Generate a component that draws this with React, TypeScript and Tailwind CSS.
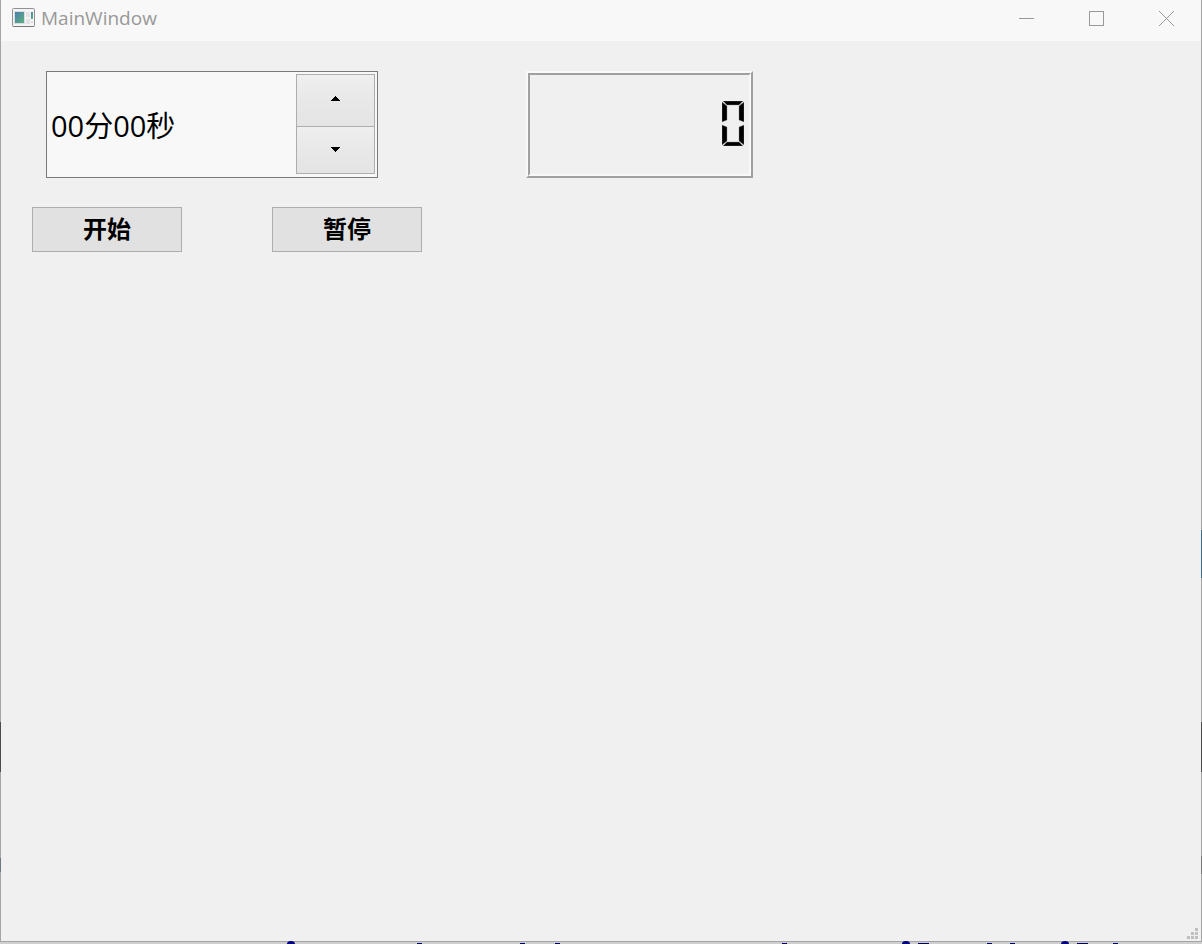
import { useEffect, useState } from "react";

const pad = (n: number) => String(n).padStart(2, "0");
const format = (s: number) => `${pad(Math.floor(s / 60))}分${pad(s % 60)}秒`;

const SEGMENTS = [
  "M1 0H21L17 4H5Z",
  "M22 1V21L17 19V5Z",
  "M22 44V24L17 26V40Z",
  "M1 45H21L17 41H5Z",
  "M0 44V24L5 26V40Z",
  "M0 1V21L5 19V5Z",
  "M3 22.500L6 20H16L19 22.500L16 25H6Z",
];

const LIT = [
  [0, 1, 2, 3, 4, 5],
  [1, 2],
  [0, 1, 6, 4, 3],
  [0, 1, 6, 2, 3],
  [5, 6, 1, 2],
  [0, 5, 6, 2, 3],
  [0, 5, 6, 4, 3, 2],
  [0, 1, 2],
  [0, 1, 2, 3, 4, 5, 6],
  [0, 1, 2, 3, 5, 6],
];

function LcdNumber({ value }: { value: number }) {
  return (
    <div className="h-[107px] w-[227px] border-2 border-t-[#f9f9f9] border-r-[#a0a0a0] border-b-[#a0a0a0] border-l-[#f9f9f9]">
      <div
        role="img"
        aria-label={String(value)}
        className="flex h-full items-center justify-end gap-1 border-2 border-t-[#a0a0a0] border-r-[#f9f9f9] border-b-[#f9f9f9] border-l-[#a0a0a0] pr-[5px] pb-0.5"
      >
        {String(value)
          .split("")
          .map((d, i) => (
            <svg
              key={i}
              width="22"
              height="45"
              viewBox="0 0 22 45"
              stroke="#8a8a8a"
              strokeWidth="0.4"
            >
              {LIT[Number(d)].map((s) => (
                <path key={s} d={SEGMENTS[s]} fill="#000" />
              ))}
            </svg>
          ))}
      </div>
    </div>
  );
}

function AppIcon() {
  return (
    <svg width="24" height="20" viewBox="0 0 24 20" aria-hidden="true">
      <defs>
        <linearGradient id="pane" x1="0" y1="0" x2="1" y2="1">
          <stop offset="0" stopColor="#4a7fae" />
          <stop offset="1" stopColor="#5db07c" />
        </linearGradient>
      </defs>
      <rect x="0.5" y="0.5" width="22" height="18" rx="1" fill="#f4f4f4" stroke="#8f9194" />
      <path d="M1 18.5H22" stroke="#77797c" />
      <rect x="2.500" y="3.500" width="10" height="12" fill="#fff" stroke="#d8dde0" />
      <rect x="3" y="4" width="9" height="11" fill="url(#pane)" />
      <rect x="14" y="4" width="4" height="5" fill="#e2e2e2" />
      <rect x="14" y="11" width="4" height="5" fill="#e2e2e2" />
      <rect x="19" y="4" width="2" height="7" fill="url(#pane)" />
      <rect x="19" y="13" width="2" height="2" fill="#dedede" />
    </svg>
  );
}

function TitleBar() {
  const control = "flex w-[70px] items-center justify-center text-[#999999]";
  return (
    <header className="flex h-[41px] items-stretch bg-[#f8f8f8] pb-1">
      <div className="flex grow items-center gap-[5px] pb-0.5 pl-[11px]">
        <AppIcon />
        <h1 className="text-[19px] leading-6 text-[#999999]">MainWindow</h1>
      </div>
      <button aria-label="Minimize" className={control}>
        <svg width="15" height="15" viewBox="0 0 15 15" stroke="currentColor">
          <path d="M0 7.500H15" />
        </svg>
      </button>
      <button aria-label="Maximize" className={control}>
        <svg width="15" height="15" viewBox="0 0 15 15" fill="none" stroke="currentColor">
          <rect x="0.5" y="0.5" width="14" height="14" />
        </svg>
      </button>
      <button aria-label="Close" className={control}>
        <svg width="15" height="15" viewBox="0 0 15 15" stroke="currentColor">
          <path d="M0 0L15 15M15 0L0 15" />
        </svg>
      </button>
    </header>
  );
}

const MARKS = [
  { x: 417, w: 5 },
  { x: 520, w: 5 },
  { x: 555, w: 5 },
  { x: 782, w: 5 },
  { x: 918, w: 11 },
  { x: 987, w: 5 },
  { x: 1010, w: 5 },
  { x: 1077, w: 11 },
  { x: 1113, w: 5 },
];

function Backdrop() {
  return (
    <svg height="3" className="block w-full bg-[#cfcfcf]" aria-hidden="true">
      <rect width="100%" height="1" fill="#a5a5a5" />
      {[291, 906, 1065].map((x) => (
        <ellipse key={x} cx={x} cy="3" rx="4" ry="3" fill="#00007f" />
      ))}
      {MARKS.map((m) => (
        <rect key={m.x} x={m.x} y="2" width={m.w} height="1" fill="#000060" />
      ))}
    </svg>
  );
}

export default function App() {
  const [seconds, setSeconds] = useState(0);
  const [remaining, setRemaining] = useState(0);
  const [running, setRunning] = useState(false);

  useEffect(() => {
    if (!running || remaining <= 0) return;
    const id = setTimeout(() => setRemaining((r) => r - 1), 1000);
    return () => clearTimeout(id);
  }, [running, remaining]);

  const start = () => {
    if (remaining === 0) setRemaining(seconds);
    setRunning(true);
  };

  const push =
    "h-[45px] w-[150px] border border-[#adadad] bg-[#e1e1e1] pb-0.5 text-2xl leading-8 font-bold text-black";
  const step =
    "flex grow basis-0 items-center justify-center bg-linear-to-b from-[#efefef] via-[#e8e8e8] to-[#e4e4e4]";

  return (
    <div className="flex min-h-screen flex-col font-['Open_Sans','Noto_Sans_CJK_SC',sans-serif]">
      <div className="flex grow">
        <div className="w-px shrink-0 bg-[linear-gradient(#a5a5a5_722px,#4c4c4c_722px,#4c4c4c_772px,#a5a5a5_772px,#a5a5a5_858px,#6f7880_858px,#6f7880_872px,#a5a5a5_872px)]" />
        <div className="flex grow flex-col bg-[#f0f0f0]">
          <TitleBar />
          <main className="flex grow flex-col gap-[29px] pt-[30px] pl-[31px]">
            <div className="flex gap-[148px] pl-3.5">
              <div className="flex h-[107px] w-[332px] border border-[#7a7a7a] bg-[#f8f8f8] pt-0.5 pr-0.5 pb-[3px]">
                <input
                  aria-label="时间"
                  readOnly
                  value={format(seconds)}
                  className="min-w-0 grow bg-transparent pt-1 pl-1 text-[29px] leading-10 text-black outline-none"
                />
                <div className="flex w-[79px] shrink-0 flex-col divide-y divide-[#adadad] border border-[#adadad]">
                  <button
                    aria-label="增加"
                    className={`${step} pb-1`}
                    onClick={() => setSeconds((s) => Math.min(s + 1, 3599))}
                  >
                    <svg width="9" height="5" viewBox="0 0 9 5" shapeRendering="crispEdges">
                      <path d="M4 0H5V1H6V2H7V3H8V4H9V5H0V4H1V3H2V2H3V1H4Z" />
                    </svg>
                  </button>
                  <button
                    aria-label="减少"
                    className={step}
                    onClick={() => setSeconds((s) => Math.max(s - 1, 0))}
                  >
                    <svg width="9" height="5" viewBox="0 0 9 5" shapeRendering="crispEdges">
                      <path d="M0 0H9V1H8V2H7V3H6V4H5V5H4V4H3V3H2V2H1V1H0Z" />
                    </svg>
                  </button>
                </div>
              </div>
              <LcdNumber value={remaining} />
            </div>
            <div className="flex gap-[90px]">
              <button className={push} onClick={start}>
                开始
              </button>
              <button className={push} onClick={() => setRunning(false)}>
                暂停
              </button>
            </div>
          </main>
          <footer className="flex justify-end pr-[3px] pb-0.5">
            <svg width="11" height="11" viewBox="0 0 11 11" fill="#bfbfbf" aria-hidden="true">
              <path d="M8 0h3v3h-3zM4 4h3v3h-3zM8 4h3v3h-3zM0 8h3v3h-3zM4 8h3v3h-3zM8 8h3v3h-3z" />
            </svg>
          </footer>
        </div>
        <div className="w-px shrink-0 bg-[linear-gradient(#a5a5a5_530px,#3a6a8c_530px,#3a6a8c_578px,#a5a5a5_578px,#a5a5a5_722px,#4c4c4c_722px,#4c4c4c_772px,#a5a5a5_772px,#a5a5a5_856px,#777777_856px,#777777_874px,#a5a5a5_874px)]" />
      </div>
      <Backdrop />
    </div>
  );
}
